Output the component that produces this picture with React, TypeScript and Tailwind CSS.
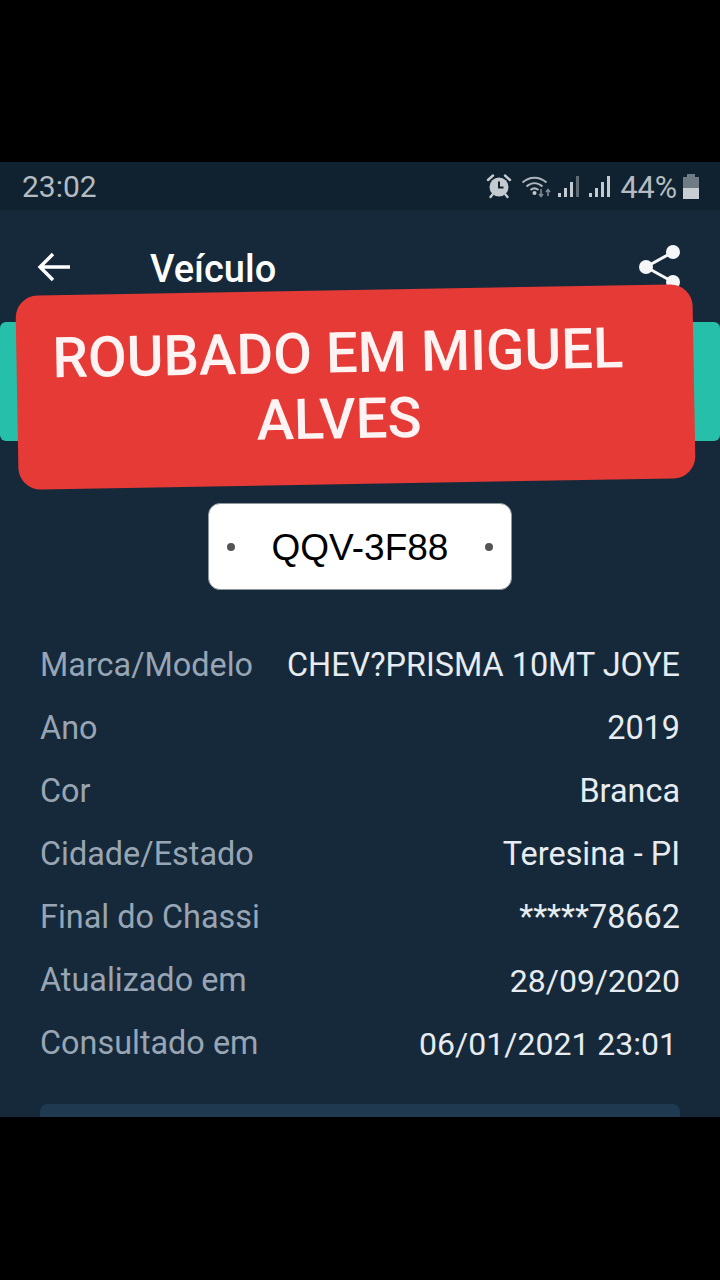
const rows = [
  ['Marca/Modelo', 'CHEV?PRISMA 10MT JOYE', ''],
  ['Ano', '2019', ''],
  ['Cor', 'Branca', ''],
  ['Cidade/Estado', 'Teresina - PI', ''],
  ['Final do Chassi', '*****78662', ''],
  ['Atualizado em', '28/09/2020', 'text-[32px]'],
  ['Consultado em', '06/01/2021 23:01', 'mr-[3px] text-[32px]'],
];

const AlarmIcon = () => (
  <svg width="26" height="26" viewBox="0 0 26 26" fill="none">
    <circle cx="13" cy="14" r="9.5" fill="#c4cbd0" />
    <path d="M13 8.5V14.5H17.5" stroke="#10222f" strokeWidth="2" />
    <path d="M2 7L7 2.5M24 7L19 2.5M6.5 21.5L4.5 24M19.5 21.5L21.5 24" stroke="#c4cbd0" strokeWidth="2.4" strokeLinecap="round" />
  </svg>
);

const WifiIcon = () => (
  <svg width="32" height="26" viewBox="0 0 32 26" fill="none">
    <path d="M1.5 9.5C8.5 3 18.5 3 25.5 9.5" stroke="#aeb6bc" strokeWidth="2" />
    <path d="M5.5 13.5C10.5 9 16.5 9 21.5 13.5" stroke="#aeb6bc" strokeWidth="2" />
    <path d="M9.5 17C12 15 15 15 17.5 17" stroke="#aeb6bc" strokeWidth="2" />
    <circle cx="13.5" cy="20" r="2" fill="#c4cbd0" />
    <path d="M20 16V23M18 21L20 23.5L22 21" stroke="#7d8a93" strokeWidth="1.6" />
    <path d="M27 23V17M25 19L27 16.5L29 19" stroke="#7d8a93" strokeWidth="1.6" />
  </svg>
);

const SignalIcon = ({ last }: { last: string }) => (
  <svg width="22" height="26" viewBox="0 0 22 26">
    <rect x="0" y="20" width="3" height="4" fill="#c4cbd0" />
    <rect x="6" y="15" width="3" height="9" fill="#c4cbd0" />
    <rect x="12" y="9" width="3" height="15" fill="#c4cbd0" />
    <rect x="18" y="3" width="3" height="21" fill={last} />
  </svg>
);

const BatteryIcon = () => (
  <div className="flex h-[25px] w-4 flex-col items-center">
    <div className="h-[3px] w-2 bg-[#6f7b84]" />
    <div className="h-[11px] w-4 bg-[#6f7b84]" />
    <div className="h-[11px] w-4 bg-[#c9ced2]" />
  </div>
);

const BackIcon = () => (
  <svg width="34" height="32" viewBox="0 0 34 32" fill="none">
    <path d="M33 16H3M16 3L3 16L16 29" stroke="#ffffff" strokeWidth="3.4" />
  </svg>
);

const ShareIcon = () => (
  <svg width="44" height="50" viewBox="0 0 44 50" fill="#f4f6f7">
    <path d="M35 9L8 24L35 39" stroke="#f4f6f7" strokeWidth="3" fill="none" />
    <circle cx="35" cy="9" r="7" />
    <circle cx="8" cy="24" r="7" />
    <circle cx="35" cy="39" r="7" />
  </svg>
);

export default function App() {
  return (
    <div className="relative min-h-[1280px] bg-black pt-[162px] font-['Roboto',sans-serif]">
      <div className="h-[955px] overflow-hidden bg-[#16293a]">
        <div className="flex h-12 items-center justify-between bg-[#10222f] pl-[22px] pr-[21px] text-[#b4bcc2]">
          <span className="mt-[2px] text-[30px] leading-9">23:02</span>
          <div className="flex items-center">
            <AlarmIcon />
            <div className="ml-[9px]"><WifiIcon /></div>
            <div className="ml-[5px]"><SignalIcon last="#5d6b75" /></div>
            <div className="ml-[9px]"><SignalIcon last="#c4cbd0" /></div>
            <span className="ml-[9px] mt-[3px] text-[30.5px] leading-9">44%</span>
            <div className="ml-[6px]"><BatteryIcon /></div>
          </div>
        </div>

        <div className="flex h-[112px] items-start pl-[37px] pr-[38px] pt-[33px]">
          <div className="pt-[8px]"><BackIcon /></div>
          <h1 className="ml-[79px] mt-[2px] text-[38px] leading-[48px] font-medium text-white">Veículo</h1>
          <div className="ml-auto"><ShareIcon /></div>
        </div>

        <div className="h-[119px] rounded-md bg-[#26bfa9]" />

        <div className="mx-auto mt-[62px] flex h-[87px] w-[304px] items-center justify-between rounded-xl border border-[#8f979d] bg-white px-[18px]">
          <span className="size-2 rounded-full bg-[#555555]" />
          <span className="mt-[3px] font-['Liberation_Sans',sans-serif] text-[37px] text-black">QQV-3F88</span>
          <span className="size-2 rounded-full bg-[#555555]" />
        </div>

        <div className="mt-[44px] px-10">
          {rows.map(([label, value, extra]) => (
            <div key={label} className="flex h-[63px] items-center justify-between text-[32.4px]">
              <span className="text-[#98a5b4]">{label}</span>
              <span className={`text-[#e6ecf1] ${extra}`}>{value}</span>
            </div>
          ))}
        </div>

        <div className="mx-10 mt-[29px] h-12 rounded-lg bg-[#1f3a50]" />
      </div>

      <div className="absolute left-[17px] top-[290px] flex h-[194px] w-[677px] -rotate-1 flex-col items-center justify-center rounded-[22px] bg-[#e53a36] pb-[2px] text-[56.3px] leading-[66px] font-medium text-[#fdf3f2]">
        <span className="-ml-[34px]">ROUBADO EM MIGUEL</span>
        <span className="-ml-[34px]">ALVES</span>
      </div>
    </div>
  );
}
